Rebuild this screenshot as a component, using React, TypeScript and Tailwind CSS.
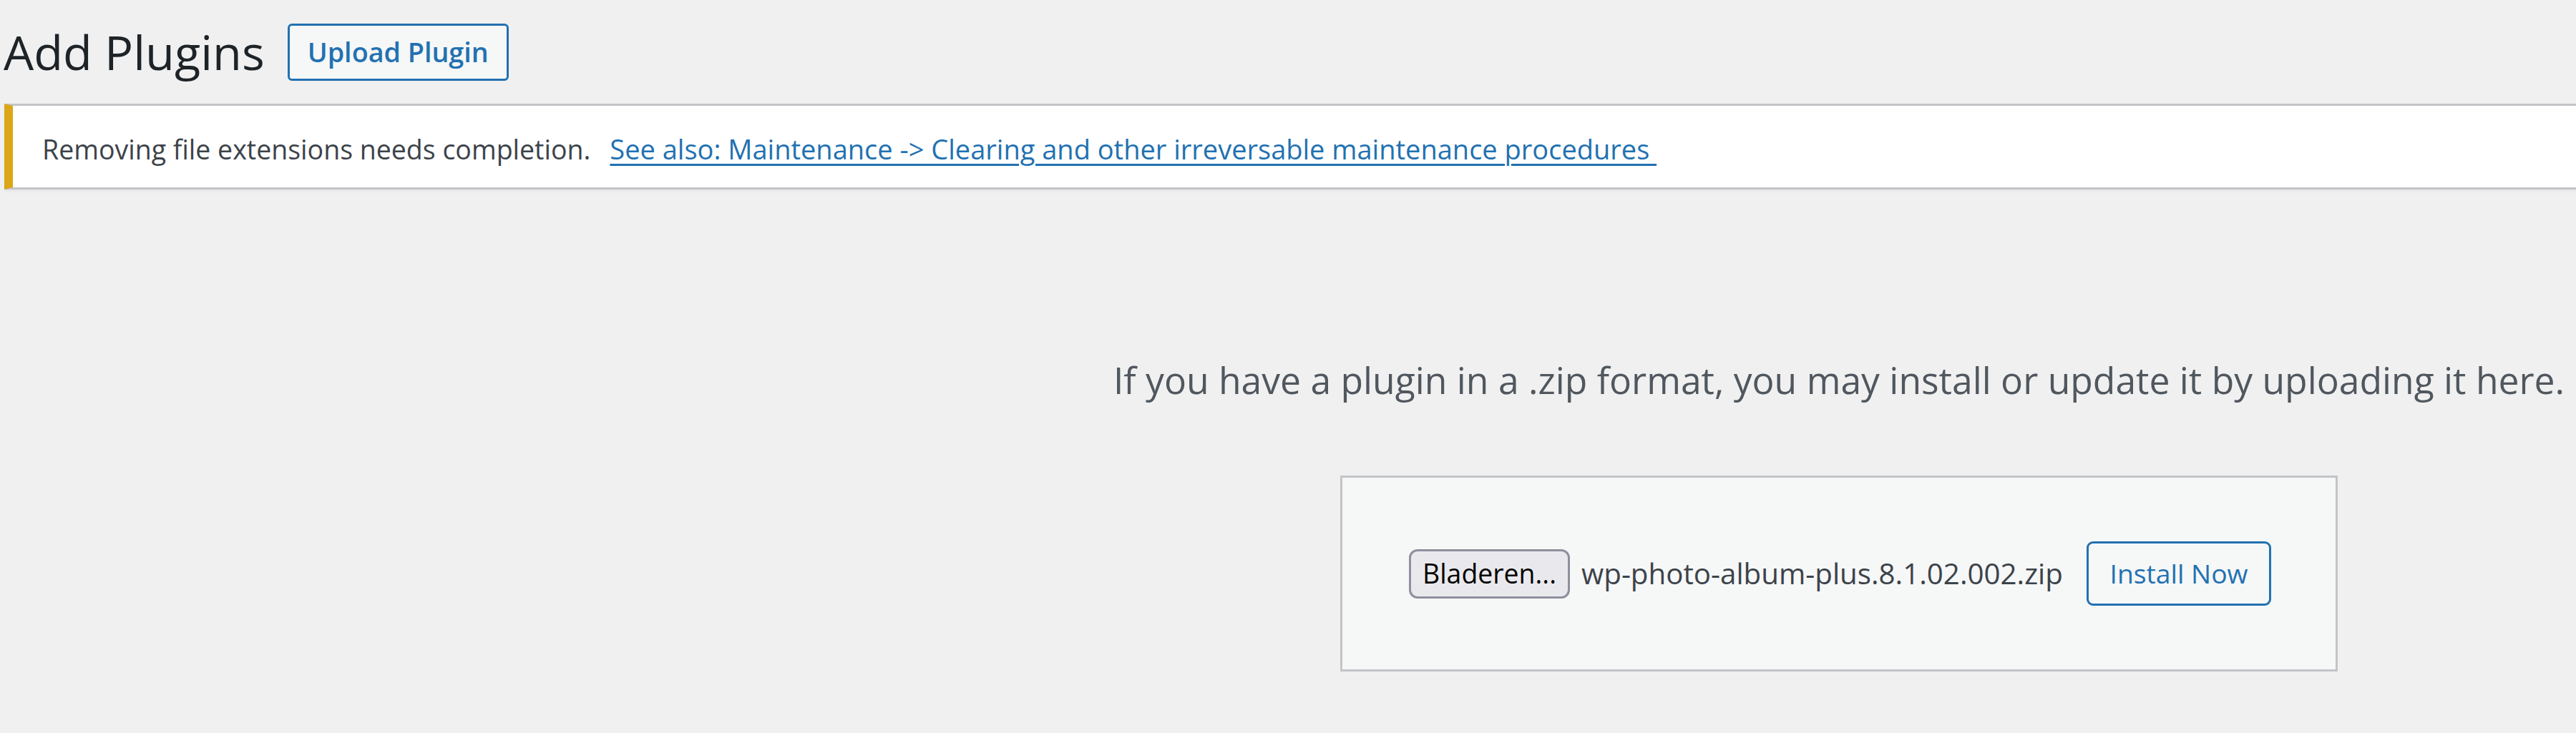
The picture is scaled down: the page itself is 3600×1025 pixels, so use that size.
import React from "react";

export default function App() {
  return (
    <div className="w-full min-h-[1025px] overflow-hidden bg-[#f0f0f1] font-['Open_Sans',sans-serif] text-[#3c434a]">
      <div className="ml-[6px] w-[5128px]">
        {/* Title row */}
        <div className="flex items-center pt-[33px]">
          <h1 className="-ml-px text-[66.7px] leading-[80px] font-normal text-[#1d2327]">Add Plugins</h1>
          <button className="ml-[32px] h-[80px] px-[25px] border-[3px] border-[#2271b1] rounded-[6px] bg-[#f6f7f7] text-[#2271b1] font-semibold text-[37.7px] leading-none">
            Upload Plugin
          </button>
        </div>

        {/* Notice */}
        <div className="mt-[32px] bg-white border-[3px] border-[#c3c4c7] border-l-[12px] border-l-[#dba617] shadow-[0_3px_3px_rgba(0,0,0,0.04)] pl-[41px] pt-[31px] pb-[24px]">
          <p className="text-[37.5px] leading-[58px] text-[#3c434a] whitespace-nowrap">
            Removing file extensions needs completion.
            <a className="ml-[27px] text-[38px] text-[#2271b1] underline underline-offset-[6px] decoration-[3px]" href="#">
              See also: Maintenance -&gt; Clearing and other irreversable maintenance procedures&nbsp;
            </a>
          </p>
        </div>

        {/* Upload section */}
        <p className="mt-[226px] text-center text-[51.6px] leading-[81px] text-[#50575e] whitespace-nowrap">
          If you have a plugin in a .zip format, you may install or update it by uploading it here.
        </p>

        <div className="mt-[93px] mx-auto w-[1394px] flex items-center justify-between bg-[#f6f7f7] border-[3px] border-[#c3c4c7] px-[90px] py-[89px]">
          <div className="flex items-center">
            <span className="ml-[3px] flex items-center justify-center w-[225px] h-[69px] border-[3px] border-[#8f8f9d] rounded-[12px] bg-[#e9e9ed] text-black text-[37.4px] leading-none">
              Bladeren...
            </span>
            <span className="ml-[16px] text-[40.3px] leading-none text-[#3c434a] whitespace-nowrap">
              wp-photo-album-plus.8.1.02.002.zip
            </span>
          </div>
          <button className="w-[258px] h-[90px] border-[3px] border-[#2271b1] rounded-[9px] bg-[#f6f7f7] text-[#2271b1] text-[37.3px] leading-none">
            Install Now
          </button>
        </div>
      </div>
    </div>
  );
}
